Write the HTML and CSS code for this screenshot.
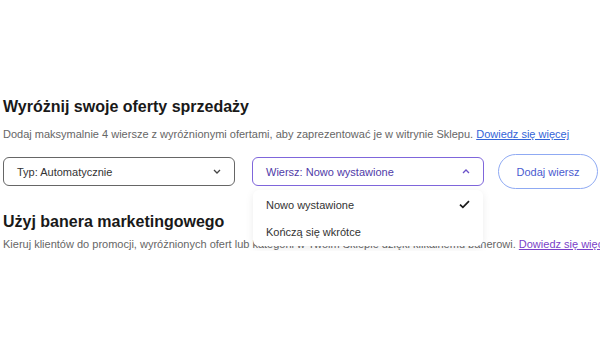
FILE: index.html
```html
<!DOCTYPE html>
<html lang="pl">
<head>
    <meta charset="UTF-8">
    <meta name="viewport" content="width=device-width, initial-scale=1.0">
    <title>Wyróżnione oferty</title>
    <link rel="stylesheet" href="styles.css">
</head>
<body>
    <div class="page">
        <section class="block">
            <h2>Wyróżnij swoje oferty sprzedaży</h2>
            <p class="desc">Dodaj maksymalnie 4 wiersze z wyróżnionymi ofertami, aby zaprezentować je w witrynie Sklepu. <a href="#" class="link">Dowiedz się więcej</a></p>
            <div class="controls">
                <div class="select">
                    <span>Typ: Automatycznie</span>
                    <svg class="chev" width="8" height="5" viewBox="0 0 8 5"><path d="M1 1 4 4 7 1" fill="none" stroke="#444" stroke-width="1.3"/></svg>
                </div>
                <div class="select open">
                    <span>Wiersz: Nowo wystawione</span>
                    <svg class="chev" width="8" height="5" viewBox="0 0 8 5"><path d="M1 4 4 1 7 4" fill="none" stroke="#6b52c8" stroke-width="1.3"/></svg>
                    <ul class="menu">
                        <li>Nowo wystawione
                            <svg width="11" height="9" viewBox="0 0 11 9"><path d="M1 4.6 3.9 7.4 10 1.2" fill="none" stroke="#1a1a1a" stroke-width="1.7"/></svg>
                        </li>
                        <li>Kończą się wkrótce</li>
                    </ul>
                </div>
                <button class="add-btn">Dodaj wiersz</button>
            </div>
        </section>
        <section class="block second">
            <h2>Użyj banera marketingowego</h2>
            <p class="desc">Kieruj klientów do promocji, wyróżnionych ofert lub kategorii w Twoim Sklepie dzięki klikalnemu banerowi. <a href="#" class="link visited">Dowiedz się więcej</a></p>
        </section>
    </div>
</body>
</html>
```

FILE: styles.css
```css
body {
    margin: 0;
    background: #fff;
    font-family: "Liberation Sans", Arial, sans-serif;
    color: #1a1a1a;
    overflow: hidden;
}

.page {
    padding: 97px 0 0 3px;
    width: 700px;
}

h2 {
    margin: 0;
    font-size: 16px;
    line-height: 20px;
    font-weight: bold;
    color: #191919;
}

.desc {
    margin: 11px 0 0;
    font-size: 11px;
    line-height: 13px;
    color: #666;
    white-space: nowrap;
}

.link {
    color: #3465d8;
    text-decoration: underline;
}

.link.visited {
    color: #7a3fc9;
}

.controls {
    display: flex;
    align-items: center;
    margin-top: 13px;
}

.select {
    position: relative;
    box-sizing: border-box;
    width: 232px;
    height: 29px;
    display: flex;
    align-items: center;
    justify-content: space-between;
    padding: 0 13px 0 13px;
    border: 1px solid #666;
    border-radius: 6px;
    font-size: 11px;
    color: #333;
    margin-right: 17px;
}

.select.open {
    border-color: #7f66db;
    color: #4f3aa8;
    margin-right: 14px;
}

.chev {
    display: block;
}

.menu {
    position: absolute;
    top: 32px;
    left: 0;
    right: 0;
    margin: 0;
    padding: 1px 0;
    list-style: none;
    background: #fff;
    border-radius: 6px;
    box-shadow: 0 2px 8px rgba(0, 0, 0, 0.08);
    z-index: 2;
}

.menu li {
    display: flex;
    align-items: center;
    justify-content: space-between;
    height: 27px;
    padding: 0 13px;
    font-size: 11px;
    color: #333;
}

.add-btn {
    box-sizing: border-box;
    width: 100px;
    height: 35px;
    border: 1.5px solid #8faaf3;
    border-radius: 18px;
    background: #fff;
    font-family: inherit;
    font-size: 11px;
    color: #4a5bd0;
    padding: 0;
}

.second {
    margin-top: 23px;
}

.second .desc {
    margin-top: 6px;
}
```
